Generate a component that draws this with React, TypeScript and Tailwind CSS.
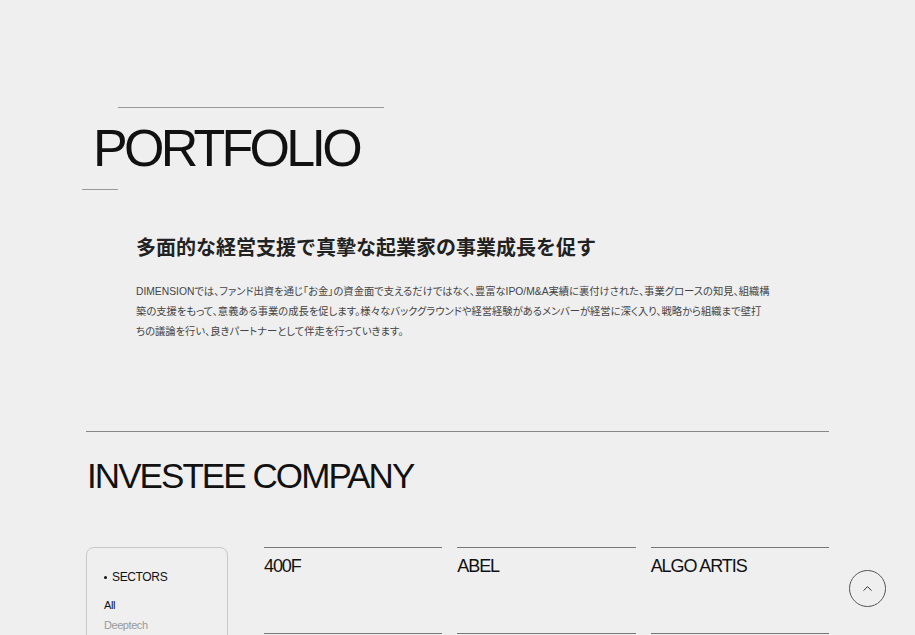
import { ChevronUp } from "lucide-react"

const companies = ["400F", "ABEL", "ALGO ARTIS", "ANGLE", "ASTROSCALE", "BEYOND"]
const sectors = ["All", "Deeptech", "SaaS", "Fintech", "Healthcare"]

export default function App() {
  return (
    <div
      className="min-h-screen bg-[#efefef] text-[#111] pb-40"
      style={{ fontFamily: '"Liberation Sans", Arial, "Noto Sans CJK JP", sans-serif' }}
    >
      {/* Portfolio heading */}
      <section className="pt-[107px]">
        <div className="ml-[118px] w-[266px] border-t border-[#999]" />
        <h1 className="ml-[93px] mt-[14px] text-[52px] leading-none tracking-[-0.072em] font-normal">
          PORTFOLIO
        </h1>
        <div className="ml-[82px] mt-[15px] w-[36px] border-t border-[#999]" />
      </section>

      <section className="ml-[136px] mt-[42px] w-[660px]">
        <h2 className="text-[20px] leading-[33px] font-bold text-[#222]">
          多面的な経営支援で真摯な起業家の事業成長を促す
        </h2>
        <p className="mt-[17px] text-[10.3px] leading-[20px] text-[#444] [font-feature-settings:'palt']">
          DIMENSIONでは、ファンド出資を通じ「お金」の資金面で支えるだけではなく、豊富なIPO/M&amp;A実績に裏付けされた、事業グロースの知見、組織構
          <br />
          築の支援をもって、意義ある事業の成長を促します。様々なバックグラウンドや経営経験があるメンバーが経営に深く入り、戦略から組織まで壁打
          <br />
          ちの議論を行い、良きパートナーとして伴走を行っていきます。
        </p>
      </section>

      {/* Investee company */}
      <section className="mx-[86px] mt-[89px] border-t border-[#888]">
        <h2 className="mt-[26px] ml-[1px] text-[35px] leading-none tracking-[-0.055em]">
          INVESTEE COMPANY
        </h2>

        <div className="mt-[54px] flex items-start gap-[36px]">
          <aside className="w-[142px] shrink-0 rounded-lg border border-[#c8c8c8] px-[17px] pt-[22px] pb-6">
            <p className="flex items-center gap-[5px] text-[12px] leading-[14px] tracking-[-0.03em]">
              <span className="h-[3px] w-[3px] rounded-full bg-[#111]" />
              SECTORS
            </p>
            <ul className="mt-[14px] space-y-[6px] text-[11px] leading-[14px] tracking-[-0.04em]">
              {sectors.map((s, i) => (
                <li key={s} className={i === 0 ? "text-[#111]" : "text-[#999]"}>
                  {s}
                </li>
              ))}
            </ul>
          </aside>

          <div className="grid flex-1 grid-cols-3 gap-x-[15px] gap-y-6">
            {companies.map((c) => (
              <div key={c} className="h-[87px] border-y border-[#777] pt-[7px]">
                <p className="text-[18px] leading-[22px] tracking-[-0.06em]">{c}</p>
              </div>
            ))}
          </div>
        </div>
      </section>

      {/* Scroll to top */}
      <button className="fixed right-[29px] bottom-[28px] flex h-[37px] w-[37px] items-center justify-center rounded-full border border-[#555] bg-transparent">
        <ChevronUp size={15} strokeWidth={1.5} className="text-[#222]" />
      </button>
    </div>
  )
}
